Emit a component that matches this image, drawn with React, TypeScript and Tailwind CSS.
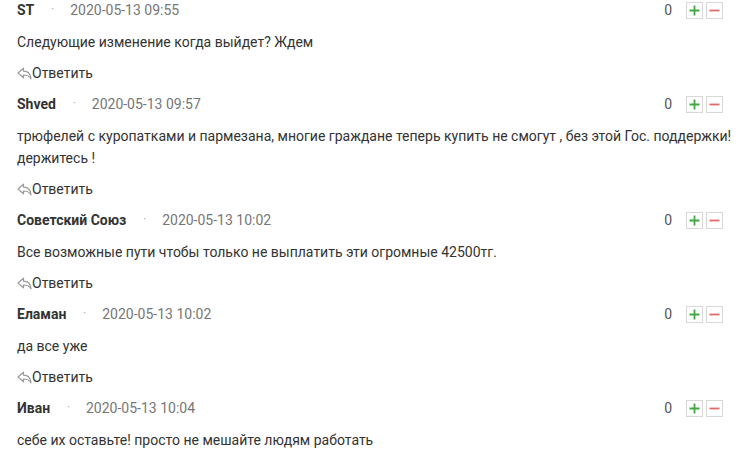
import React from "react";

type C = { name: string; date: string; text: string };

const comments: C[] = [
  { name: "ST", date: "2020-05-13 09:55", text: "Следующие изменение когда выйдет? Ждем" },
  {
    name: "Shved",
    date: "2020-05-13 09:57",
    text: "трюфелей с куропатками и пармезана, многие граждане теперь купить не смогут , без этой Гос. поддержки! держитесь !",
  },
  { name: "Советский Союз", date: "2020-05-13 10:02", text: "Все возможные пути чтобы только не выплатить эти огромные 42500тг." },
  { name: "Еламан", date: "2020-05-13 10:02", text: "да все уже" },
  { name: "Иван", date: "2020-05-13 10:04", text: "себе их оставьте! просто не мешайте людям работать" },
];

function ReplyIcon() {
  return (
    <svg width="15" height="13" viewBox="0 0 15 13" className="shrink-0">
      <path
        d="M1 6 L6.5 1.2 L6.5 4.2 C10.5 4.2 13.6 6.5 14 11.8 C12.3 8.8 10 8 6.5 8 L6.5 10.8 Z"
        fill="none"
        stroke="#9a9a9a"
        strokeWidth="1.2"
        strokeLinejoin="round"
      />
    </svg>
  );
}

function Comment({ c }: { c: C }) {
  return (
    <div className="pb-[11px]">
      <div className="mr-[10px] flex h-[20px] items-center">
        <span className="text-[14px] font-bold text-[#333]">{c.name}</span>
        <span className="ml-[17px] mr-[16px] text-[11px] text-[#999]">·</span>
        <span className="text-[14px] text-[#777]">{c.date}</span>
        <div className="ml-auto flex items-center">
          <span className="text-[14px] text-[#555]">0</span>
          <div className="ml-[14px] flex h-[17px] w-[17px] items-center justify-center border border-[#d8d8d8] bg-white">
            <svg width="11" height="11" viewBox="0 0 11 11">
              <path d="M5.5 0.5 V10.5 M0.5 5.5 H10.5" stroke="#43a843" strokeWidth="1.8" />
            </svg>
          </div>
          <div className="ml-[3px] flex h-[17px] w-[17px] items-center justify-center border border-[#d8d8d8] bg-white">
            <svg width="11" height="11" viewBox="0 0 11 11">
              <path d="M0.5 5.5 H10.5" stroke="#e06a6a" strokeWidth="1.8" />
            </svg>
          </div>
        </div>
      </div>
      <div className="mt-[11px] text-[14px] leading-[22px] text-[#333]">{c.text}</div>
      <div className="mt-[10px] flex h-[20px] items-center text-[14px] text-[#333]">
        <ReplyIcon />
        <span>Ответить</span>
      </div>
    </div>
  );
}

export default function App() {
  return (
    <div
      className="h-[465px] w-[740px] overflow-hidden bg-white pl-[17px] pr-[7px]"
      style={{ fontFamily: "Roboto, 'Noto Sans', sans-serif" }}
    >
      {comments.map((c, i) => (
        <Comment key={i} c={c} />
      ))}
    </div>
  );
}
